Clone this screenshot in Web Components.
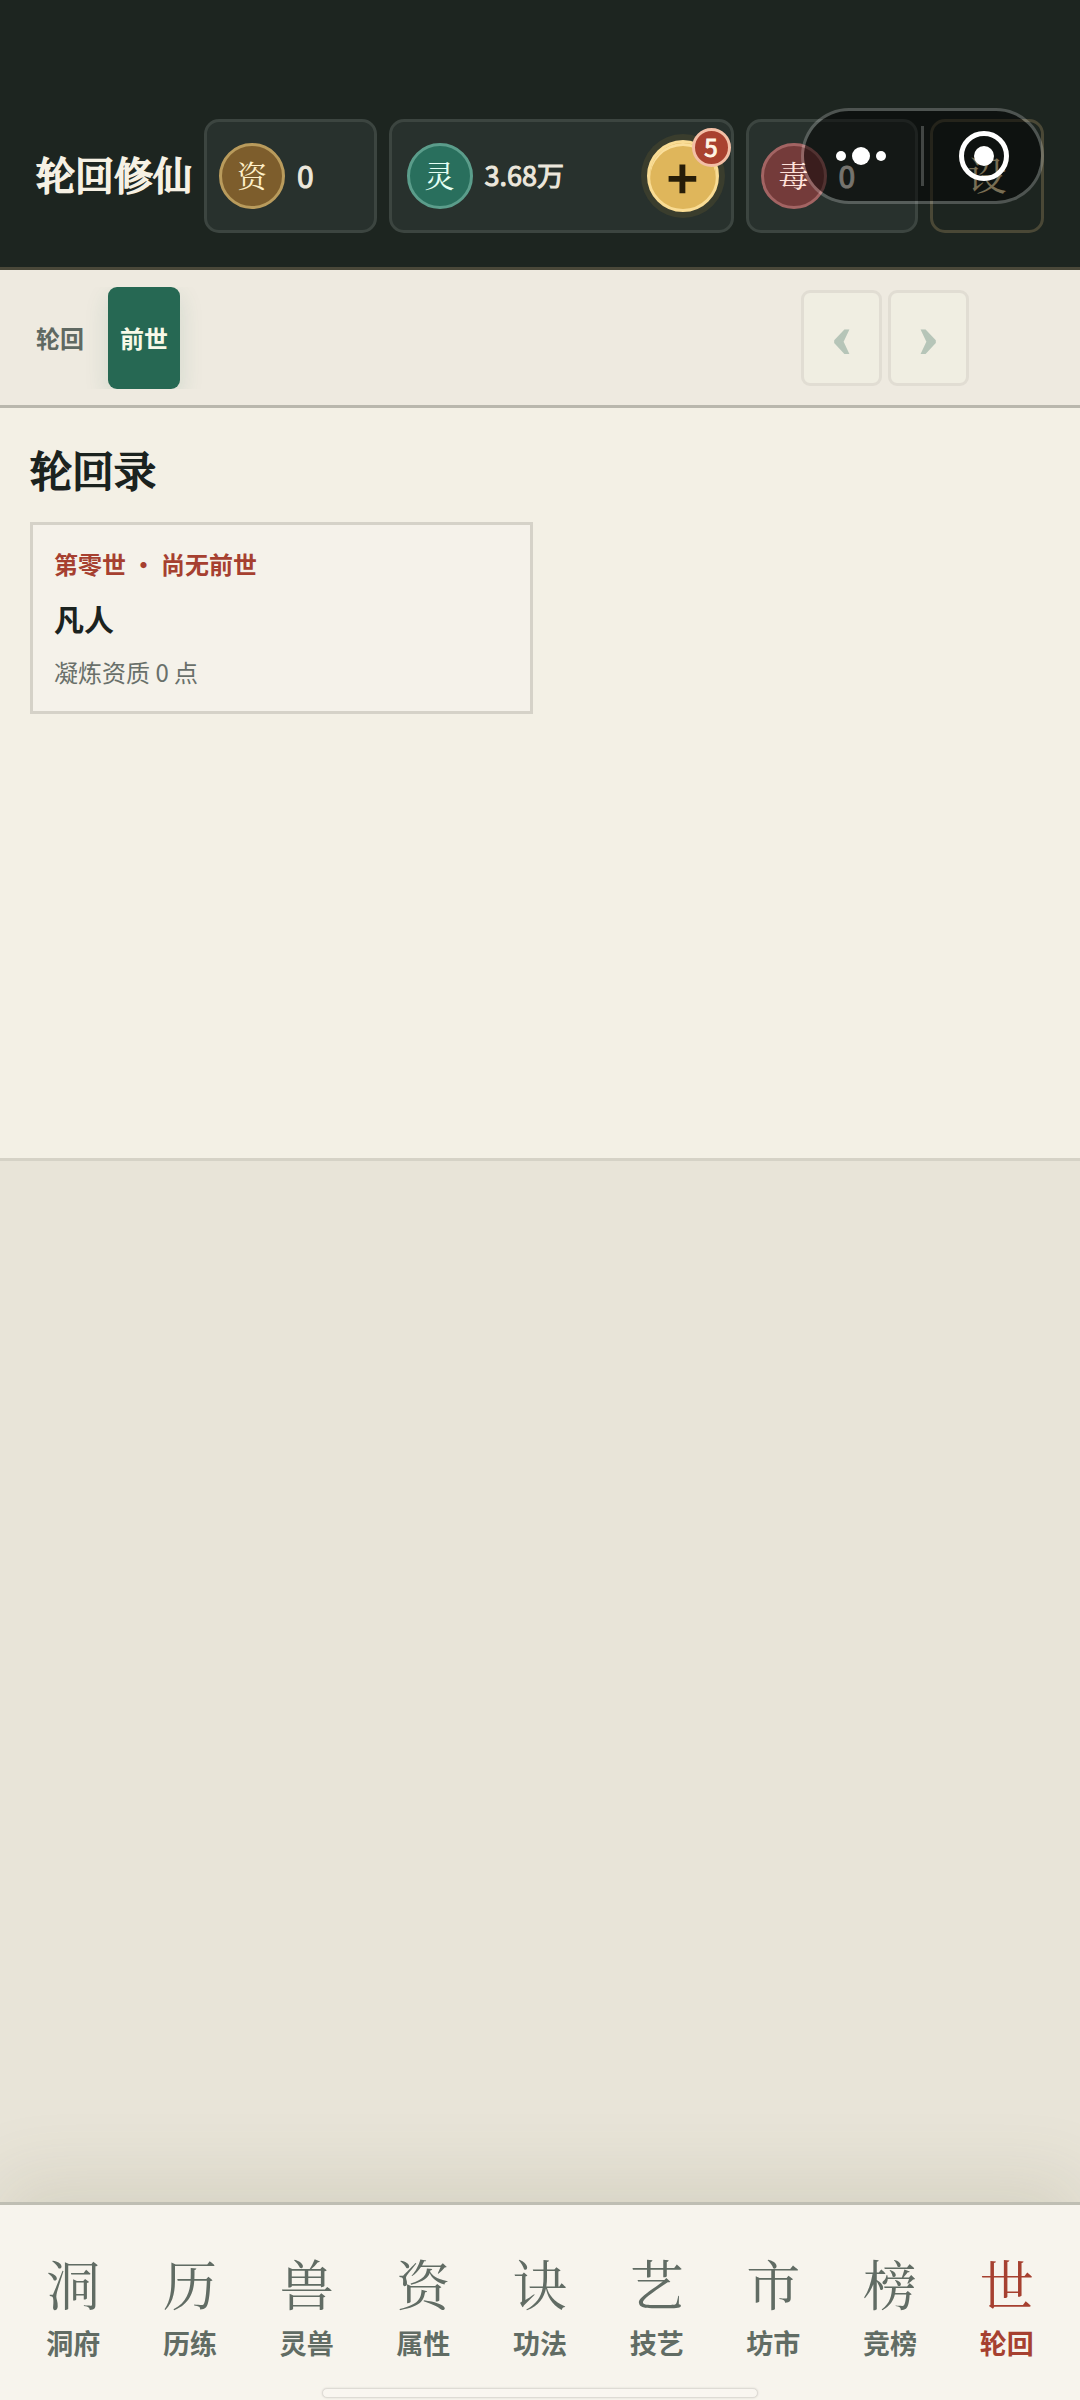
<!DOCTYPE html>
<html lang="zh-CN">
<head>
<meta charset="UTF-8">
<meta name="viewport" content="width=device-width, initial-scale=1">
<title>轮回修仙</title>
<style>
    :root {
        --ink: #1b231f;
        --muted: #5f6962;
        --paper: #f3f0e5;
        --card: #f5f2ea;
        --jade: #266853;
        --cinnabar: #a64030;
        --serif: "Noto Serif CJK SC", "Noto Serif SC", "Songti SC", "Noto Sans CJK SC", serif;
        --sans: "Noto Sans CJK SC", "Noto Sans", sans-serif;
    }

    body {
        margin: 0;
        font-family: var(--sans);
        color: var(--ink);
        background: #e8e4d8;
    }
</style>
</head>
<body>
<game-app>
    <game-header slot="header" name="轮回修仙">
        <resource-chip glyph="资" value="0" tone="gold"></resource-chip>
        <resource-chip glyph="灵" value="3.68万" tone="jade" badge="5" wide></resource-chip>
        <resource-chip glyph="毒" value="0" tone="red"></resource-chip>
    </game-header>
    <sub-tabs slot="tabs" items="轮回,前世" active="前世"></sub-tabs>
    <record-panel slot="content" heading="轮回录">
        <life-card era="第零世 ・ 尚无前世" realm="凡人" note="凝炼资质 0 点"></life-card>
    </record-panel>
    <bottom-nav slot="nav" items="洞:洞府,历:历练,兽:灵兽,资:属性,诀:功法,艺:技艺,市:坊市,榜:竞榜,世:轮回" active="轮回"></bottom-nav>
</game-app>

<script>
class GameApp extends HTMLElement {
    constructor() {
        super();
        this.attachShadow({ mode: 'open' });
        this.shadowRoot.innerHTML = `
            <style>
                :host {
                    display: flex;
                    flex-direction: column;
                    min-height: 100vh;
                }

                main {
                    flex: 1;
                }
            </style>
            <slot name="header"></slot>
            <slot name="tabs"></slot>
            <main><slot name="content"></slot></main>
            <slot name="nav"></slot>
        `;
    }
}

class GameHeader extends HTMLElement {
    constructor() {
        super();
        this.attachShadow({ mode: 'open' });
    }

    connectedCallback() {
        this.shadowRoot.innerHTML = `
            <style>
                :host {
                    display: block;
                    position: relative;
                    padding: 119px 36px 34px;
                    background: #1d2520;
                    border-bottom: 3px solid #4a4839;
                }

                .row {
                    display: grid;
                    grid-template-columns: auto minmax(0, 1fr) minmax(0, 2fr) minmax(0, 1fr) 114px;
                    gap: 12px;
                    height: 114px;
                }

                h1 {
                    margin: 0;
                    padding-bottom: 6px;
                    align-self: center;
                    font: 400 39px/48px var(--serif);
                    -webkit-text-stroke: 2px;
                    color: #f6f1e4;
                    white-space: nowrap;
                }

                .settings {
                    padding: 0 0 6px;
                    border: 3px solid #4a4836;
                    border-radius: 15px;
                    background: transparent;
                    color: #f0dda9;
                    font: 400 39px/48px var(--serif);
                }

                mini-capsule {
                    position: absolute;
                    top: 108px;
                    right: 36px;
                }
            </style>
            <div class="row">
                <h1>${this.getAttribute('name')}</h1>
                <slot></slot>
                <button class="settings" type="button">设</button>
            </div>
            <mini-capsule></mini-capsule>
        `;
    }
}

class ResourceChip extends HTMLElement {
    constructor() {
        super();
        this.attachShadow({ mode: 'open' });
    }

    connectedCallback() {
        const badge = this.getAttribute('badge');
        this.shadowRoot.innerHTML = `
            <style>
                :host {
                    display: flex;
                    box-sizing: border-box;
                    align-items: center;
                    gap: 12px;
                    padding: 0 12px;
                    border: 3px solid #3c4540;
                    border-radius: 15px;
                    background: #28312d;
                    font: 400 30px/36px var(--sans);
                    color: #ece7dc;
                }

                :host([wide]) {
                    padding-left: 15px;
                    font-size: 27px;
                }

                .value {
                    padding-bottom: 2px;
                    -webkit-text-stroke: 1px;
                }

                .glyph {
                    flex: none;
                    box-sizing: border-box;
                    width: 66px;
                    height: 66px;
                    border: 3px solid;
                    border-radius: 50%;
                    text-align: center;
                    font: 400 30px/57px var(--serif);
                }

                :host([tone="gold"]) .glyph { background: #7d5d2c; border-color: #b99b5c; }
                :host([tone="jade"]) .glyph { background: #296f5d; border-color: #5b9d8b; }
                :host([tone="red"]) .glyph { background: #743b3a; border-color: #a36463; }
                :host([tone="gold"]) .glyph span { color: #fff0c9; }
                :host([tone="jade"]) .glyph span { color: #e4fff4; }
                :host([tone="red"]) .glyph span { color: #ffe2da; }

                .add {
                    position: relative;
                    flex: none;
                    box-sizing: border-box;
                    width: 72px;
                    height: 72px;
                    margin-left: auto;
                    padding: 0;
                    border: 3px solid #f9dc94;
                    border-radius: 50%;
                    background: #dfb65b;
                    box-shadow: 0 0 0 6px #3a3d2d, inset 0 3px 0 #fadf9c;
                    color: #271d08;
                    font: 700 54px/66px var(--sans);
                }

                .badge {
                    position: absolute;
                    top: -15px;
                    right: -15px;
                    box-sizing: border-box;
                    width: 39px;
                    height: 39px;
                    border: 3px solid #f3bfa6;
                    border-radius: 50%;
                    background: #a9412f;
                    color: #fff4e4;
                    font: 400 24px/32px var(--sans);
                    -webkit-text-stroke: 1px;
                }
            </style>
            <div class="glyph"><span>${this.getAttribute('glyph')}</span></div>
            <span class="value">${this.getAttribute('value')}</span>
            ${badge ? `<button class="add" type="button">+<span class="badge">${badge}</span></button>` : ''}
        `;
    }
}

// floating host menu: more / close
class MiniCapsule extends HTMLElement {
    constructor() {
        super();
        this.attachShadow({ mode: 'open' });
        this.shadowRoot.innerHTML = `
            <style>
                :host {
                    display: flex;
                    box-sizing: border-box;
                    width: 243px;
                    height: 96px;
                    align-items: center;
                    border: 3px solid rgba(255, 255, 255, 0.22);
                    border-radius: 48px;
                    background: rgba(0, 0, 0, 0.5);
                    background-clip: padding-box;
                }

                button {
                    display: flex;
                    flex: 1;
                    height: 100%;
                    align-items: center;
                    justify-content: center;
                    padding: 0 3px 0 0;
                    border: 0;
                    background: none;
                }

                button:last-child {
                    padding: 0 0 0 3px;
                }

                i {
                    width: 3px;
                    height: 60px;
                    background: rgba(255, 255, 255, 0.22);
                }
            </style>
            <button type="button" aria-label="更多">
                <svg width="50" height="18" viewBox="0 0 50 18" fill="#fff">
                    <circle cx="5" cy="9" r="5"/>
                    <circle cx="25" cy="9" r="9"/>
                    <circle cx="45" cy="9" r="5"/>
                </svg>
            </button>
            <i></i>
            <button type="button" aria-label="关闭">
                <svg width="50" height="50" viewBox="0 0 50 50">
                    <circle cx="25" cy="25" r="22.5" fill="none" stroke="#fff" stroke-width="5"/>
                    <circle cx="25" cy="25" r="10" fill="#fff"/>
                </svg>
            </button>
        `;
    }
}

class SubTabs extends HTMLElement {
    constructor() {
        super();
        this.attachShadow({ mode: 'open' });
    }

    connectedCallback() {
        const active = this.getAttribute('active');
        this.shadowRoot.innerHTML = `
            <style>
                :host {
                    display: flex;
                    height: 135px;
                    align-items: center;
                    justify-content: space-between;
                    padding: 0 111px 0 24px;
                    background: #eeeae0;
                    border-bottom: 3px solid #b9b7ad;
                }

                .tabs {
                    display: flex;
                    gap: 12px;
                    padding: 0 30px 0 0;
                    overflow: hidden;
                }

                .tabs button {
                    height: 102px;
                    padding: 0 12px;
                    border: 0;
                    border-radius: 9px;
                    background: none;
                    color: var(--muted);
                    font: 700 24px/36px var(--sans);
                }

                .tabs button[aria-selected="true"] {
                    background: var(--jade);
                    color: #f8fae8;
                    box-shadow: 0 9px 24px rgba(38, 104, 83, 0.14);
                }

                .pager {
                    display: flex;
                    gap: 6px;
                }

                .pager button {
                    width: 81px;
                    height: 96px;
                    padding: 0 0 6px;
                    border: 3px solid #e1ddd3;
                    border-radius: 9px;
                    background: #f0eee2;
                    color: #b6c5b8;
                    font: 700 60px/60px "Liberation Serif", serif;
                    -webkit-text-stroke: 2px;
                }
            </style>
            <div class="tabs" role="tablist">
                ${this.getAttribute('items').split(',').map(item =>
                    `<button type="button" role="tab" aria-selected="${item === active}">${item}</button>`
                ).join('')}
            </div>
            <div class="pager">
                <button type="button" disabled>‹</button>
                <button type="button" disabled>›</button>
            </div>
        `;
    }
}

class RecordPanel extends HTMLElement {
    constructor() {
        super();
        this.attachShadow({ mode: 'open' });
    }

    connectedCallback() {
        this.shadowRoot.innerHTML = `
            <style>
                :host {
                    display: block;
                    box-sizing: border-box;
                    min-height: 753px;
                    padding: 30px;
                    background: var(--paper);
                    border-bottom: 3px solid #d5d2c6;
                }

                h2 {
                    margin: 0 0 21px;
                    font: 400 42px/63px var(--serif);
                    -webkit-text-stroke: 2px;
                    color: var(--ink);
                }

                .grid {
                    display: grid;
                    grid-template-columns: 1fr 1fr;
                    gap: 15px;
                }
            </style>
            <h2>${this.getAttribute('heading')}</h2>
            <div class="grid"><slot></slot></div>
        `;
    }
}

class LifeCard extends HTMLElement {
    constructor() {
        super();
        this.attachShadow({ mode: 'open' });
    }

    connectedCallback() {
        this.shadowRoot.innerHTML = `
            <style>
                :host {
                    display: flex;
                    flex-direction: column;
                    gap: 15px;
                    padding: 21px;
                    border: 3px solid #d5d2c8;
                    background: var(--card);
                }

                p, h3 { margin: 0; }
                .era { font: 700 24px/36px var(--sans); color: var(--cinnabar); }
                h3 { font: 700 30px/42px var(--sans); }
                .note { font: 400 24px/36px var(--sans); color: #69706a; }
            </style>
            <p class="era">${this.getAttribute('era')}</p>
            <h3>${this.getAttribute('realm')}</h3>
            <p class="note">${this.getAttribute('note')}</p>
        `;
    }
}

class BottomNav extends HTMLElement {
    constructor() {
        super();
        this.attachShadow({ mode: 'open' });
    }

    connectedCallback() {
        const active = this.getAttribute('active');
        const items = this.getAttribute('items').split(',').map(item => item.split(':'));
        this.shadowRoot.innerHTML = `
            <style>
                :host {
                    display: block;
                    position: relative;
                    background: #f7f4ed;
                    border-top: 3px solid #bfbeb3;
                    box-shadow: 0 -24px 72px rgba(88, 92, 52, 0.12);
                }

                nav {
                    display: grid;
                    grid-auto-flow: column;
                    grid-auto-columns: 1fr;
                    padding: 48px 15px 39px;
                }

                button {
                    display: flex;
                    flex-direction: column;
                    align-items: center;
                    gap: 12px;
                    padding: 0;
                    border: 0;
                    background: none;
                    color: #616c64;
                    font: 700 27px/36px var(--sans);
                }

                button[aria-current] { color: var(--cinnabar); }
                .glyph { font: 400 54px/60px var(--serif); }

                .home {
                    position: absolute;
                    left: 50%;
                    bottom: 2px;
                    box-sizing: border-box;
                    width: 436px;
                    height: 10px;
                    margin-left: -218px;
                    border: 1px solid #dedbd5;
                    border-radius: 5px;
                    background: #f9f6f0;
                    box-shadow: 0 0 2px #d6d3cc;
                }
            </style>
            <nav>
                ${items.map(([glyph, label]) => `
                    <button type="button" ${label === active ? 'aria-current="page"' : ''}>
                        <span class="glyph">${glyph}</span>
                        <span>${label}</span>
                    </button>
                `).join('')}
            </nav>
            <div class="home"></div>
        `;
    }
}

customElements.define('game-app', GameApp);
customElements.define('game-header', GameHeader);
customElements.define('resource-chip', ResourceChip);
customElements.define('mini-capsule', MiniCapsule);
customElements.define('sub-tabs', SubTabs);
customElements.define('record-panel', RecordPanel);
customElements.define('life-card', LifeCard);
customElements.define('bottom-nav', BottomNav);
</script>
</body>
</html>
